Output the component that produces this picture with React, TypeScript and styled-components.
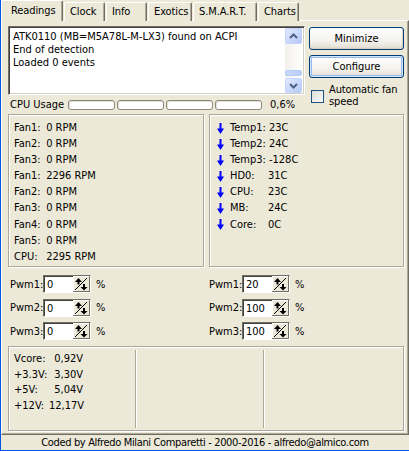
import React from "react";
import styled, { createGlobalStyle } from "styled-components";

const FONT = `Tahoma, "DejaVu Sans Condensed", "Liberation Sans", sans-serif`;

const Global = createGlobalStyle`
  html, body { margin: 0; padding: 0; background: #ece9d8; }
  body { font-family: ${FONT}; font-size: 11px; color: #000; }
  * { box-sizing: border-box; }
`;

const Window = styled.div`
  width: 409px;
  height: 451px;
  border-left: 1px solid #0054e3;
  border-bottom: 1px solid #0054e3;
  background: #ece9d8;
  display: flex;
  flex-direction: column;
  overflow: hidden;
`;

const TabStrip = styled.div`
  display: flex;
  align-items: flex-end;
  height: 21px;
  margin-bottom: -1px;
  position: relative;
  z-index: 1;
`;

const Tab = styled.div<{ $active?: boolean; $w: number }>`
  width: ${(p) => p.$w}px;
  height: ${(p) => (p.$active ? 21 : 19)}px;
  padding: ${(p) => (p.$active ? "3px 0 0 9px" : "2px 0 0 5px")};
  margin-left: ${(p) => (p.$active ? 0 : 1)}px;
  background: #ece9d8;
  border-top: 1px solid #fff;
  border-left: 1px solid #fff;
  border-right: 1px solid #716f64;
  border-top-left-radius: 2px;
  border-top-right-radius: 2px;
  box-shadow: inset -1px 0 0 #aca899;
  white-space: nowrap;
  line-height: 14px;
  letter-spacing: -0.1px;
`;

const TabPanel = styled.div`
  height: 415px;
  border-top: 1px solid #fff;
  border-left: 1px solid #fff;
  border-right: 1px solid #716f64;
  border-bottom: 1px solid #716f64;
  box-shadow: inset 0 -1px 0 #aca899, inset -1px 0 0 #aca899;
  padding: 5px 4px 0 6px;
  display: flex;
  flex-direction: column;
`;

const TopSection = styled.div`
  display: grid;
  grid-template-columns: 1fr 95px;
  column-gap: 4px;
`;

const LeftCol = styled.div`
  display: flex;
  flex-direction: column;
`;

const LogBox = styled.div`
  height: 69px;
  background: #fff;
  border-top: 1px solid #716f64;
  border-left: 1px solid #716f64;
  border-right: 1px solid #fff;
  border-bottom: 1px solid #fff;
  box-shadow: inset 1px 1px 0 #404040, inset -1px -1px 0 #d4d0c8;
  display: flex;
  padding: 1px 2px 1px 1px;
`;

const LogText = styled.div`
  flex: 1;
  padding: 2px 0 0 3px;
  line-height: 13px;
  white-space: nowrap;
  overflow: hidden;
`;

const ScrollBar = styled.div`
  width: 17px;
  display: flex;
  flex-direction: column;
  background: linear-gradient(90deg, #f3f1ec, #fefefb);
`;

const ScrollBtn = styled.div<{ $h: number }>`
  height: ${(p) => p.$h}px;
  border: 1px solid #c3d3fd;
  border-radius: 2px;
  background: linear-gradient(135deg, #e2eafe 0%, #c8d7fc 55%, #b4c8f6 100%);
  display: flex;
  align-items: center;
  justify-content: center;
`;

const Track = styled.div`
  flex: 1;
  display: flex;
  flex-direction: column;
  justify-content: flex-end;
  padding-bottom: 2px;
`;

const Thumb = styled.div`
  height: 6px;
  border: 1px solid #b7cbf7;
  border-radius: 2px;
  background: linear-gradient(90deg, #c9d8fc, #b9cdf8);
`;

const CpuRow = styled.div`
  display: flex;
  align-items: center;
  height: 15px;
  margin-top: 2px;
  padding-left: 2px;
`;

const CpuLabel = styled.span`
  width: 58px;
`;

const BarGroup = styled.div`
  display: flex;
  gap: 2px;
`;

const Bar = styled.div`
  width: 47px;
  height: 10px;
  border: 1px solid #8a877a;
  border-radius: 3px;
  background: #fff;
  box-shadow: inset 1px 1px 0 #e6e3d6;
`;

const Percent = styled.span`
  margin-left: 8px;
`;

const RightCol = styled.div`
  display: flex;
  flex-direction: column;
  padding-top: 1px;
`;

const XpButton = styled.button<{ $default?: boolean }>`
  height: 23px;
  width: 95px;
  margin-bottom: 5px;
  font-family: ${FONT};
  font-size: 11px;
  color: #000;
  border: 1px solid #003c74;
  border-radius: 3px;
  background: linear-gradient(180deg, #ffffff 0%, #f4f3ee 60%, #e6e3d8 90%, #d6d0c5 100%);
  box-shadow: ${(p) =>
    p.$default
      ? "inset 0 0 0 1px #cee7ff, inset 0 0 0 2px #98b8ea"
      : "inset -1px -1px 0 #d6d0c5"};
  padding: 0;
`;

const CheckRow = styled.div`
  display: flex;
  align-items: center;
  margin-top: 1px;
  padding-left: 2px;
`;

const CheckBox = styled.div`
  width: 13px;
  height: 13px;
  flex: none;
  border: 1px solid #1c5180;
  background: linear-gradient(135deg, #dcdcd7, #fbfbf9);
  margin-right: 5px;
`;

const CheckText = styled.span`
  line-height: 12px;
  letter-spacing: -0.1px;
`;

const GroupRow = styled.div`
  display: grid;
  grid-template-columns: 196px 1fr;
  column-gap: 5px;
  margin-top: 2px;
  height: 153px;
`;

const Group = styled.div<{ $pl: number }>`
  border: 1px solid #aca899;
  box-shadow: inset 1px 1px 0 #fff, 1px 1px 0 #fff;
  padding: 5px 0 0 ${(p) => p.$pl}px;
  line-height: 16.1px;
`;

const Line = styled.div`
  display: flex;
  align-items: center;
  height: 16.1px;
  white-space: pre;
`;

const FanLabel = styled.span`
  width: 29px;
`;

const Arrow = styled.svg`
  width: 7px;
  height: 11px;
  margin-right: 6px;
  flex: none;
`;

const TempLabel = styled.span<{ $w?: number }>`
  min-width: ${(p) => p.$w ?? 0}px;
`;

const PwmGrid = styled.div`
  display: grid;
  grid-template-columns: 201px 1fr;
  row-gap: 5.5px;
  margin-top: 8px;
`;

const PwmRow = styled.div<{ $pl?: number }>`
  display: flex;
  align-items: center;
  height: 18px;
  padding-left: ${(p) => p.$pl ?? 0}px;
`;

const PwmLabel = styled.span`
  width: 33px;
`;

const SpinBox = styled.div`
  width: 48px;
  height: 18px;
  display: flex;
  align-items: center;
  background: #fff;
  border-top: 1px solid #716f64;
  border-left: 1px solid #716f64;
  border-right: 1px solid #fff;
  border-bottom: 1px solid #fff;
  box-shadow: inset 1px 1px 0 #404040;
  padding: 1px 0 0 2px;
`;

const SpinValue = styled.span`
  flex: 1;
  padding-left: 1px;
`;

const SpinIcon = styled.svg`
  width: 17px;
  height: 16px;
  flex: none;
  margin-top: -1px;
`;

const Unit = styled.span`
  margin-left: 5px;
`;

const VoltGroup = styled.div`
  margin-top: 6px;
  height: 85px;
  border: 1px solid #aca899;
  box-shadow: inset 1px 1px 0 #fff, 1px 1px 0 #fff;
  display: grid;
  grid-template-columns: 126px 128px 1fr;
`;

const VoltCol = styled.div<{ $div?: boolean }>`
  margin: 3px 0 2px;
  padding: 1px 0 0 5px;
  border-left: ${(p) => (p.$div ? "1px solid #aca899" : "none")};
  box-shadow: ${(p) => (p.$div ? "inset 1px 0 0 #fff" : "none")};
  line-height: 15.7px;
`;

const VoltLine = styled.div`
  display: flex;
  height: 15.7px;
`;

const VoltLabel = styled.span`
  width: 35px;
`;

const VoltValue = styled.span`
  width: 34px;
  text-align: right;
`;

const Footer = styled.div`
  flex: 1;
  display: flex;
  align-items: center;
  justify-content: center;
  white-space: nowrap;
  letter-spacing: -0.35px;
`;

const Chevron = ({ up }: { up?: boolean }) => (
  <svg width="9" height="6" viewBox="0 0 9 6">
    <polyline
      points={up ? "1,5 4.5,1.5 8,5" : "1,1 4.5,4.5 8,1"}
      fill="none"
      stroke="#4d6185"
      strokeWidth="2"
    />
  </svg>
);

const BlueArrow = () => (
  <Arrow viewBox="0 0 7 11">
    <rect x="2.5" y="0" width="2" height="7" fill="#0000ff" />
    <polygon points="0,5.5 7,5.5 3.5,11" fill="#0000ff" />
  </Arrow>
);

const Spin = () => (
  <SpinIcon viewBox="0 0 17 16">
    <rect x="0" y="0" width="17" height="16" fill="#ece9d8" />
    <line x1="0.5" y1="0" x2="0.5" y2="16" stroke="#fff" />
    <line x1="0" y1="0.5" x2="17" y2="0.5" stroke="#fff" />
    <line x1="16.5" y1="0" x2="16.5" y2="16" stroke="#716f64" />
    <line x1="0" y1="15.5" x2="17" y2="15.5" stroke="#716f64" />
    <line x1="2" y1="14" x2="14" y2="2" stroke="#000" strokeWidth="1" />
    <polygon points="2,6 5.5,2 9,6" fill="#000" />
    <rect x="4.5" y="5" width="2" height="3.5" fill="#000" />
    <rect x="10" y="8" width="2" height="3.5" fill="#000" />
    <polygon points="7.5,11 14.5,11 11,14.5" fill="#000" />
  </SpinIcon>
);

const fans: [string, string][] = [
  ["Fan1:", "0 RPM"],
  ["Fan2:", "0 RPM"],
  ["Fan3:", "0 RPM"],
  ["Fan1:", "2296 RPM"],
  ["Fan2:", "0 RPM"],
  ["Fan3:", "0 RPM"],
  ["Fan4:", "0 RPM"],
  ["Fan5:", "0 RPM"],
  ["CPU:", "2295 RPM"],
];

const temps: [string, string, boolean][] = [
  ["Temp1:", "23C", true],
  ["Temp2:", "24C", true],
  ["Temp3:", "-128C", true],
  ["HD0:", "31C", false],
  ["CPU:", "23C", false],
  ["MB:", "24C", false],
  ["Core:", "0C", false],
];

const volts: [string, string][] = [
  ["Vcore:", "0,92V"],
  ["+3.3V:", "3,30V"],
  ["+5V:", "5,04V"],
  ["+12V:", "12,17V"],
];

const pwmLeft = ["0", "0", "0"];
const pwmRight = ["20", "100", "100"];

const tabs: [string, number][] = [
  ["Readings", 62],
  ["Clock", 41],
  ["Info", 41],
  ["Exotics", 44],
  ["S.M.A.R.T.", 64],
  ["Charts", 41],
];

export default function App() {
  return (
    <>
      <Global />
      <Window>
        <TabStrip>
          {tabs.map(([t, w], i) => (
            <Tab key={t} $w={w} $active={i === 0}>
              {t}
            </Tab>
          ))}
        </TabStrip>
        <TabPanel>
          <TopSection>
            <LeftCol>
              <LogBox>
                <LogText>
                  <div>ATK0110 (MB=M5A78L-M-LX3) found on ACPI</div>
                  <div>End of detection</div>
                  <div>Loaded 0 events</div>
                </LogText>
                <ScrollBar>
                  <ScrollBtn $h={16}>
                    <Chevron up />
                  </ScrollBtn>
                  <Track>
                    <Thumb />
                  </Track>
                  <ScrollBtn $h={15}>
                    <Chevron />
                  </ScrollBtn>
                </ScrollBar>
              </LogBox>
              <CpuRow>
                <CpuLabel>CPU Usage</CpuLabel>
                <BarGroup>
                  <Bar />
                  <Bar />
                  <Bar />
                  <Bar />
                </BarGroup>
                <Percent>0,6%</Percent>
              </CpuRow>
            </LeftCol>
            <RightCol>
              <XpButton>Minimize</XpButton>
              <XpButton $default>Configure</XpButton>
              <CheckRow>
                <CheckBox />
                <CheckText>
                  Automatic fan
                  <br />
                  speed
                </CheckText>
              </CheckRow>
            </RightCol>
          </TopSection>

          <GroupRow>
            <Group $pl={5}>
              {fans.map(([l, v], i) => (
                <Line key={i}>
                  <FanLabel>{l}</FanLabel>
                  {" " + v}
                </Line>
              ))}
            </Group>
            <Group $pl={7}>
              {temps.map(([l, v, inline], i) => (
                <Line key={i}>
                  <BlueArrow />
                  {inline ? (
                    <span>{`${l} ${v}`}</span>
                  ) : (
                    <>
                      <TempLabel $w={38}>{l}</TempLabel>
                      <span>{v}</span>
                    </>
                  )}
                </Line>
              ))}
            </Group>
          </GroupRow>

          <PwmGrid>
            {[0, 1, 2].map((i) => (
              <React.Fragment key={i}>
                <PwmRow $pl={2}>
                  <PwmLabel>{`Pwm${i + 1}:`}</PwmLabel>
                  <SpinBox>
                    <SpinValue>{pwmLeft[i]}</SpinValue>
                    <Spin />
                  </SpinBox>
                  <Unit>%</Unit>
                </PwmRow>
                <PwmRow>
                  <PwmLabel>{`Pwm${i + 1}:`}</PwmLabel>
                  <SpinBox>
                    <SpinValue>{pwmRight[i]}</SpinValue>
                    <Spin />
                  </SpinBox>
                  <Unit>%</Unit>
                </PwmRow>
              </React.Fragment>
            ))}
          </PwmGrid>

          <VoltGroup>
            <VoltCol>
              {volts.map(([l, v]) => (
                <VoltLine key={l}>
                  <VoltLabel>{l}</VoltLabel>
                  <VoltValue>{v}</VoltValue>
                </VoltLine>
              ))}
            </VoltCol>
            <VoltCol $div />
            <VoltCol $div />
          </VoltGroup>
        </TabPanel>
        <Footer>Coded by Alfredo Milani Comparetti - 2000-2016 - alfredo@almico.com</Footer>
      </Window>
    </>
  );
}
